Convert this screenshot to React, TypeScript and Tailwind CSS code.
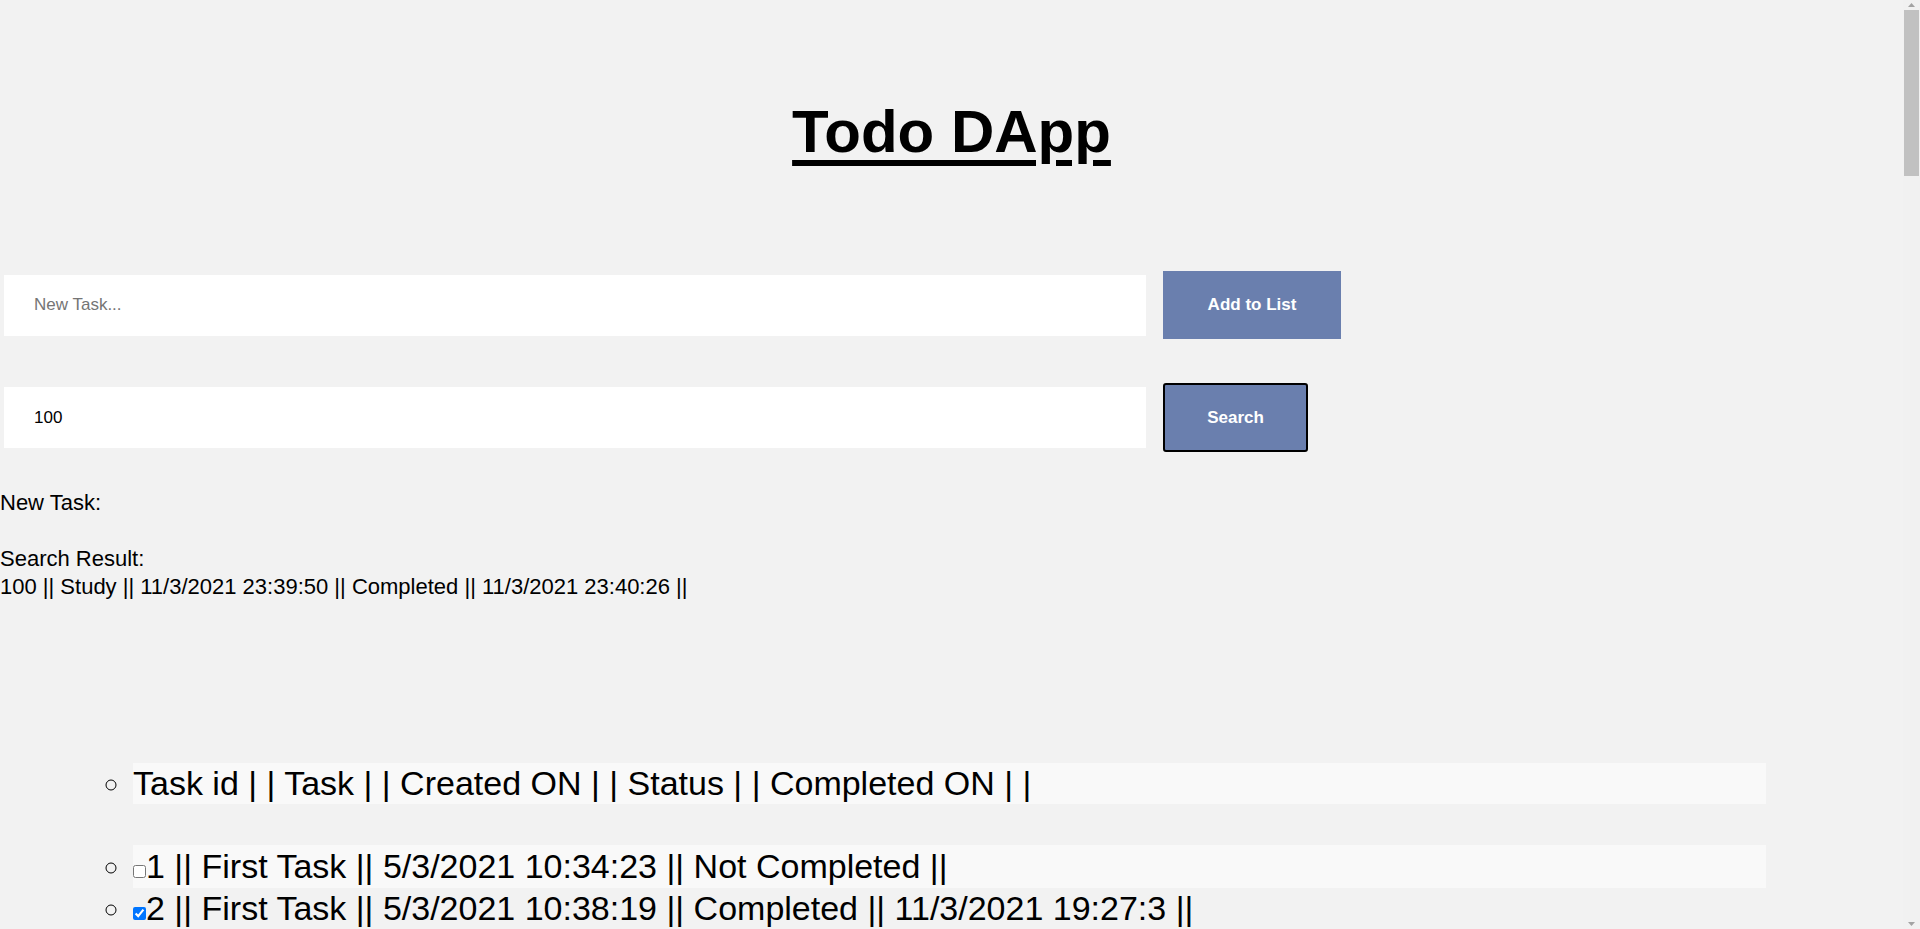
import { useState } from "react";

type Task = {
  id: number;
  content: string;
  created: string;
  done: boolean;
  completed?: string;
};

const tasks: Task[] = [
  { id: 1, content: "First Task", created: "5/3/2021 10:34:23", done: false },
  {
    id: 2,
    content: "First Task",
    created: "5/3/2021 10:38:19",
    done: true,
    completed: "11/3/2021 19:27:3",
  },
];

function Scrollbar() {
  return (
    <div className="flex h-[929px] w-[17px] shrink-0 flex-col items-center bg-[#f1f1f1]">
      <svg width="17" height="10" viewBox="0 0 17 10" className="shrink-0">
        <path d="M5 7 L8.5 3 L12 7 Z" fill="#a3a3a3" />
      </svg>
      <div className="h-[166px] w-[15px] bg-[#c1c1c1]" />
      <div className="flex-1" />
      <svg width="17" height="10" viewBox="0 0 17 10" className="shrink-0">
        <path d="M5 3 L8.5 7 L12 3 Z" fill="#a3a3a3" />
      </svg>
    </div>
  );
}

export default function App() {
  const [newTask, setNewTask] = useState("");
  const [searchId, setSearchId] = useState("100");

  return (
    <div className="flex h-[929px] overflow-hidden bg-[#f2f2f2] text-black font-['Liberation_Sans',sans-serif]">
      <div className="w-[1903px] shrink-0">
        <h1 className="pt-[96px] text-center text-[60px] leading-[72px] font-bold underline decoration-[6px] underline-offset-[8px]">
          Todo DApp
        </h1>

        <div className="mt-[103px] flex items-center gap-[17px] pl-[4px]">
          <input
            className="h-[61px] w-[1142px] bg-white px-[30px] text-[17px] outline-none placeholder:text-[#757575]"
            placeholder="New Task..."
            value={newTask}
            onChange={(e) => setNewTask(e.target.value)}
          />
          <button className="h-[68px] w-[178px] bg-[#6a7fae] text-[17px] font-bold text-white">
            Add to List
          </button>
        </div>

        <div className="mt-[44px] flex items-center gap-[17px] pl-[4px]">
          <input
            className="h-[61px] w-[1142px] bg-white px-[30px] text-[17px] outline-none"
            value={searchId}
            onChange={(e) => setSearchId(e.target.value)}
          />
          <button className="h-[69px] w-[145px] rounded-[3px] border-2 border-black bg-[#6a7fae] text-[17px] font-bold text-white">
            Search
          </button>
        </div>

        <div className="mt-[37px] text-[22px] leading-[28px]">
          <p>New Task:</p>
          <p className="mt-[28px]">Search Result:</p>
          <p>100 || Study || 11/3/2021 23:39:50 || Completed || 11/3/2021 23:40:26 ||</p>
        </div>

        <ul className="mt-[162px] list-[circle] pl-[133px] pr-[137px] text-[34px]">
          <li className="bg-[#f9f9f9] leading-[41px]">
            Task id | | Task | | Created ON | | Status | | Completed ON | |
          </li>
        </ul>

        <ul className="mt-[41px] list-[circle] pl-[133px] pr-[137px] text-[34px]">
          {tasks.map((t) => (
            <li key={t.id} className={t.done ? "leading-[41px]" : "bg-[#f9f9f9] leading-[43px]"}>
              <input type="checkbox" defaultChecked={t.done} className="m-0 h-[13px] w-[13px] align-baseline" />
              {t.id} || {t.content} || {t.created} || {t.done ? "Completed" : "Not Completed"} ||
              {t.completed ? ` ${t.completed} ||` : ""}
            </li>
          ))}
        </ul>
      </div>
      <Scrollbar />
    </div>
  );
}
